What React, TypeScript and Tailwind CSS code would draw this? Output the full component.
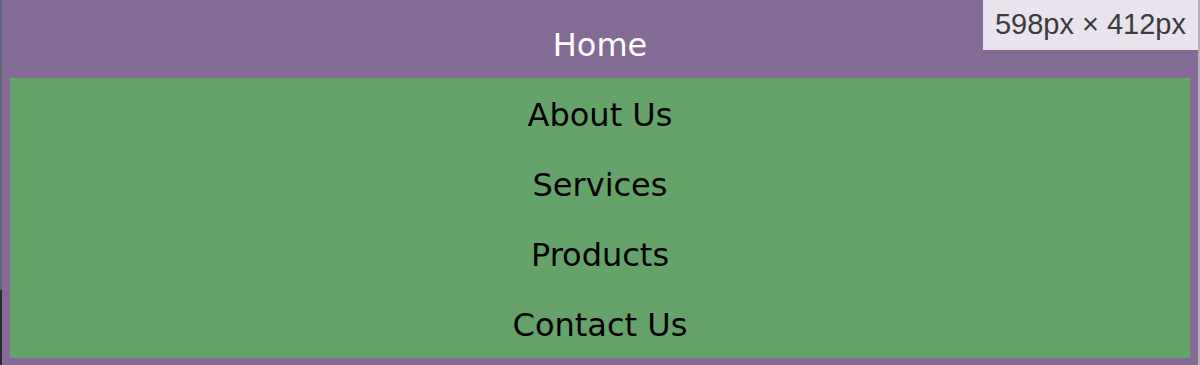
import React from "react";

// Menu entries shown in the green dropdown
const items = ["About Us", "Services", "Products", "Contact Us"];

export default function App() {
  return (
    <div className="relative flex h-[365px] w-[1200px] overflow-hidden bg-[#836b95] font-['DejaVu_Sans',Verdana,sans-serif]">
      {/* left window edge */}
      <div className="flex w-[2px] flex-col">
        <div className="h-[290px] bg-[#5f6678]" />
        <div className="flex-1 bg-[#2c2a36]" />
      </div>

      <nav className="flex flex-1 flex-col pt-2">
        <a className="flex h-[70px] items-center justify-center pt-1 text-[32px] text-white">Home</a>
        <ul className="mx-2 flex flex-col bg-[#65a36b]">
          {items.map((item) => (
            <li
              key={item}
              className="flex h-[70px] items-center justify-center pt-1 text-[32px] text-black"
            >
              {item}
            </li>
          ))}
        </ul>
      </nav>

      {/* right window edge */}
      <div className="w-[2px] bg-[#b4b2b8]" />

      {/* size overlay */}
      <div className="absolute right-[2px] top-0 flex h-[50px] items-center bg-[#e8e3ec] px-3 font-['Liberation_Sans',Arial,sans-serif] text-[29px] text-[#3b3b3d]">
        598px × 412px
      </div>
    </div>
  );
}
